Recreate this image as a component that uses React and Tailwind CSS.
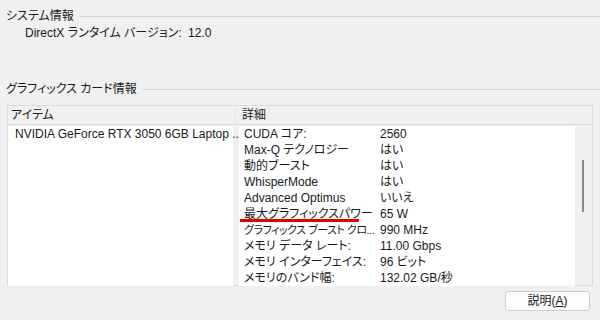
import React from 'react'

const details = [
  ['CUDA コア:', '2560'],
  ['Max-Q テクノロジー', 'はい'],
  ['動的ブースト', 'はい'],
  ['WhisperMode', 'はい'],
  ['Advanced Optimus', 'いいえ'],
  ['最大グラフィックスパワー', '65 W', true],
  ['グラフィックス ブースト クロ...', '990 MHz', false, true],
  ['メモリ データ レート:', '11.00 Gbps'],
  ['メモリ インターフェイス:', '96 ビット'],
  ['メモリのバンド幅:', '132.02 GB/秒'],
]

function GroupTitle({ children }) {
  return (
    <div className="flex items-center h-[16px] pl-[6px]">
      <span className="whitespace-nowrap">{children}</span>
      <div className="flex-1 h-px bg-[#d2d2d2] ml-[6px]" />
    </div>
  )
}

export default function App() {
  return (
    <div
      className="w-[600px] h-[320px] bg-[#f0f0f0] text-[#1a1a1a] text-[12px] leading-[16px] flex flex-col overflow-hidden [font-feature-settings:'palt']"
      style={{ fontFamily: '"Liberation Sans", "Noto Sans CJK JP", sans-serif' }}
    >
      {/* System info */}
      <div className="mt-[8px]">
        <GroupTitle>システム情報</GroupTitle>
        <div className="flex pl-[25px] mt-[1px]">
          <span className="w-[163px]">DirectX ランタイム バージョン:</span>
          <span>12.0</span>
        </div>
      </div>

      {/* Graphics card info */}
      <div className="mt-[40px]">
        <GroupTitle>グラフィックス カード情報</GroupTitle>
      </div>

      <div className="mt-[8px] mx-[7px] h-[181px] border border-[#dadada] flex flex-col">
        {/* Header */}
        <div className="flex h-[19px] border-b border-[#dadada] shrink-0">
          <div className="w-[228px] pl-[3px] flex items-center border-r border-[#e4e4e4]">アイテム</div>
          <div className="flex-1 pl-[6px] flex items-center">詳細</div>
        </div>

        {/* Body */}
        <div className="flex flex-1 pt-[1px]">
          <div className="w-[225px] bg-white pl-[7px]">
            <div className="whitespace-nowrap">NVIDIA GeForce RTX 3050 6GB Laptop ...</div>
          </div>
          <div className="w-[6px]" />
          <div className="flex-1 bg-white pl-[5px] overflow-hidden">
            {details.map(([label, value, marked, long]) => (
              <div key={label} className="flex h-[16px] relative">
                <span
                  className={
                    long
                      ? 'w-[136px] whitespace-nowrap text-[11px] tracking-[-0.5px]'
                      : 'w-[136px] whitespace-nowrap'
                  }
                >
                  {label}
                </span>
                <span className="whitespace-nowrap">{value}</span>
                {marked && (
                  <div className="absolute left-[-4px] top-[13px] w-[119px] h-[3px] bg-[#e50000]" />
                )}
              </div>
            ))}
          </div>
          <div className="w-[17px] flex justify-center">
            <div className="mt-[34px] w-[2px] h-[52px] bg-[#8a8a8a] ml-[-1px]" />
          </div>
        </div>
      </div>

      {/* Footer */}
      <div className="flex justify-end pr-[10px] mt-[5px]">
        <button className="w-[85px] h-[20px] rounded-[3px] border border-[#cfcfcf] bg-[#fdfdfd] text-[12px] leading-[16px] flex items-center justify-center">
          説明(<span className="underline">A</span>)
        </button>
      </div>
    </div>
  )
}
